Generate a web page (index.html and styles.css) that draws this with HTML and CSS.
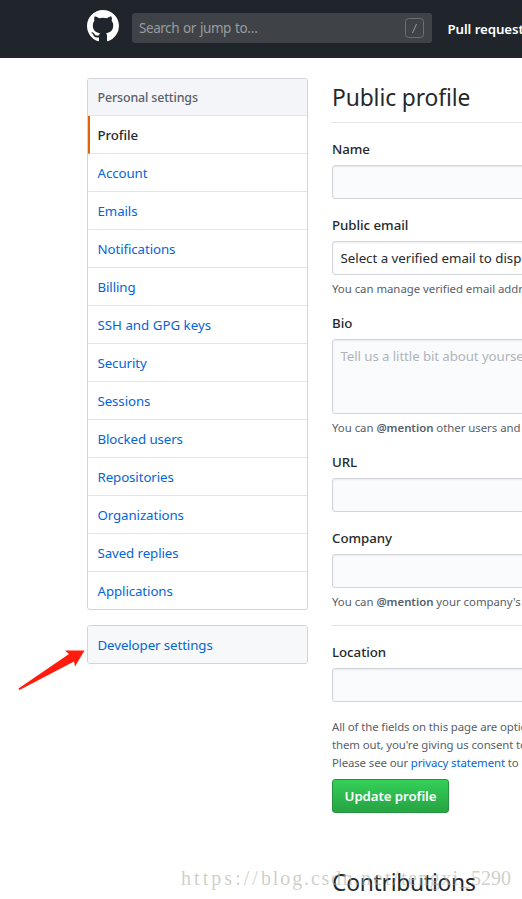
FILE: index.html
```html
<!DOCTYPE html>
<html lang="en">
<head>
<meta charset="utf-8">
<title>Public profile</title>
<link rel="stylesheet" href="styles.css">
</head>
<body>
<header class="header">
  <svg class="logo" viewBox="0 0 16 16" width="32" height="32"><path fill="#fff" fill-rule="evenodd" d="M8 0C3.58 0 0 3.58 0 8c0 3.54 2.29 6.53 5.47 7.59.4.07.55-.17.55-.38 0-.19-.01-.82-.01-1.49-2.01.37-2.53-.49-2.69-.94-.09-.23-.48-.94-.82-1.13-.28-.15-.68-.52-.01-.53.63-.01 1.08.58 1.23.82.72 1.21 1.87.87 2.33.66.07-.52.28-.87.51-1.07-1.78-.2-3.64-.89-3.64-3.95 0-.87.31-1.59.82-2.15-.08-.2-.36-1.02.08-2.12 0 0 .67-.21 2.2.82.64-.18 1.32-.27 2-.27.68 0 1.36.09 2 .27 1.53-1.04 2.2-.82 2.2-.82.44 1.1.16 1.92.08 2.12.51.56.82 1.27.82 2.15 0 3.07-1.87 3.75-3.65 3.95.29.25.54.73.54 1.48 0 1.07-.01 1.93-.01 2.2 0 .21.15.46.55.38A8.013 8.013 0 0 0 16 8c0-4.42-3.58-8-8-8z"/></svg>
  <div class="search"><span class="search-text">Search or jump to…</span>
    <svg class="slash" width="20" height="21" viewBox="0 0 20 21" fill="none" stroke="#6d7072"><rect x=".5" y=".5" width="18" height="19" rx="3"/><path stroke="#979a9c" d="M11.5 6l-4 9"/></svg>
  </div>
  <a class="nav-link">Pull requests</a>
</header>
<main class="page">
  <aside class="sidebar">
    <nav class="menu">
      <h3 class="menu-heading">Personal settings</h3>
      <a class="menu-item selected">Profile</a>
      <a class="menu-item">Account</a>
      <a class="menu-item">Emails</a>
      <a class="menu-item">Notifications</a>
      <a class="menu-item">Billing</a>
      <a class="menu-item keys">SSH and GPG keys</a>
      <a class="menu-item">Security</a>
      <a class="menu-item">Sessions</a>
      <a class="menu-item">Blocked users</a>
      <a class="menu-item">Repositories</a>
      <a class="menu-item">Organizations</a>
      <a class="menu-item">Saved replies</a>
      <a class="menu-item">Applications</a>
    </nav>
    <nav class="menu developer"><a class="menu-item">Developer settings</a></nav>
  </aside>
  <section class="content">
    <h2 class="title">Public profile</h2>
    <div class="group"><label class="label">Name</label><div class="input"></div></div>
    <div class="group"><label class="label">Public email</label><div class="input select">Select a verified email to display</div><p class="note">You can manage verified email addresses</p></div>
    <div class="group after-note"><label class="label">Bio</label><div class="input area">Tell us a little bit about yourself</div><p class="note">You can <b>@mention</b> other users and organizations</p></div>
    <div class="group after-note"><label class="label">URL</label><div class="input"></div></div>
    <div class="group"><label class="label">Company</label><div class="input"></div><p class="note">You can <b>@mention</b> your company's GitHub</p></div>
    <hr class="rule">
    <div class="group"><label class="label">Location</label><div class="input"></div></div>
    <p class="consent">All of the fields on this page are optional<br>them out, you're giving us consent to<br>Please see our <a>privacy statement</a> to</p>
    <button class="button">Update profile</button>
    <h2 class="contributions">Contributions</h2>
  </section>
</main>
<svg class="arrow" width="68" height="42" viewBox="0 0 68 42"><path fill="#ff1b0d" d="M.5 40.500L51 6L47 2.500L66.500 2.500L57 18.500L56 13.500L1.500 42Z"/></svg>
<div class="watermark"><span class="w1">https://</span><span class="w2">blog.</span><span class="w3">csdn.</span><span class="w4">net/</span><span class="w5">tengxi_</span><span>5290</span></div>
</body>
</html>
```
FILE: styles.css
```css
* { box-sizing: border-box; }
html, body { margin: 0; height: 899px; overflow: hidden; }
body { position: relative; background: #fff; color: #24292e; font: 13.3px/21px "Noto Sans", sans-serif; white-space: nowrap; }
h2, h3, p { margin: 0; }
.header { display: flex; height: 58px; padding: 10px 0 0 87px; background: #20252b; align-items: flex-start; }
.logo { flex: none; }
.search { flex: none; display: flex; align-items: center; justify-content: space-between; width: 300px; height: 30px; margin: 3px 0 0 13px; padding: 0 7px; border-radius: 3px; background: #3f4347; color: #999b9e; }
.search-text { letter-spacing: -.5px; }
.search-text { letter-spacing: -.45px; word-spacing: 1px; font-size: 13.5px; }
.nav-link { margin: 9px 0 0 15.5px; color: #fff; font-weight: 600; letter-spacing: -.1px; }
.page { display: flex; gap: 24px; padding: 20px 0 0 87px; }
.sidebar { flex: none; width: 221px; }
.menu { border: 1px solid #d1d5da; border-radius: 3px; overflow: hidden; margin-bottom: 15px; }
.menu-heading { height: 37px; padding: 8px 9.5px; border-bottom: 1px solid #e1e4e8; background: #f3f5f8; color: #586069; font-size: 12.4px; line-height: 21px; font-weight: 500; letter-spacing: -.12px; }
.menu-item { display: block; height: 38px; padding: 9px 9.5px 7px; border-bottom: 1px solid #e1e4e8; color: #0366d6; letter-spacing: -.1px; }
.menu-item:last-child { height: 37px; border-bottom: 0; }
.keys { letter-spacing: 0; }
.selected { color: #24292e; font-weight: 500; border-left: 2px solid #e36209; padding-left: 7.5px; }
.developer .menu-item { background: #f6f8fa; }
.content { flex: none; width: 500px; }
.title { height: 45px; padding-top: 2px; border-bottom: 1px solid #e1e4e8; font-size: 22.8px; line-height: 36px; font-weight: 400; letter-spacing: -.1px; }
.group { margin-top: 15px; }
.after-note { margin-top: 14px; }
.label { display: block; height: 21px; padding-top: 1px; margin-bottom: 6px; font-weight: 500; letter-spacing: -.05px; }
.input { height: 34px; padding: 6px 7.5px 4px; border: 1px solid #d1d5da; border-radius: 3px; background: #fafbfc; box-shadow: inset 0 1px 2px rgba(27,31,35,.075); }
.select { background: #fff; letter-spacing: -.03px; }
.area { height: 75px; color: #b1b5ba; letter-spacing: -.1px; }
.note { margin-top: 5px; height: 18px; font-size: 11.4px; line-height: 18px; color: #586069; letter-spacing: -.03px; }
.note b { font-weight: 600; }
.rule { height: 1px; margin: 14px 0 0; border: 0; background: #dfe2e5; }
.consent { margin-top: 16px; font-size: 11.4px; line-height: 18px; color: #586069; letter-spacing: -.1px; }
.consent a { color: #0366d6; }
.button { display: block; width: 117px; height: 34px; margin-top: 7px; padding: 0; border: 1px solid #259440; border-radius: 3px; background: linear-gradient(#34d058, #28a745 90%); color: #fff; font: 600 13.3px/20px "Noto Sans", sans-serif; letter-spacing: -.1px; }
.contributions { margin-top: 52px; font-size: 22.8px; line-height: 36px; font-weight: 400; letter-spacing: -.25px; }
.arrow { position: absolute; left: 18px; top: 648px; }
.watermark { position: absolute; left: 181px; top: 866px; font: 20px/24px "Liberation Serif", serif; color: rgba(175,175,165,.6); }
.w1 { letter-spacing: 3.05px; }
.w2 { letter-spacing: 1.89px; }
.w3 { letter-spacing: 1.67px; }
.w4 { letter-spacing: 2.5px; }
.w5 { letter-spacing: 1.43px; }
```
